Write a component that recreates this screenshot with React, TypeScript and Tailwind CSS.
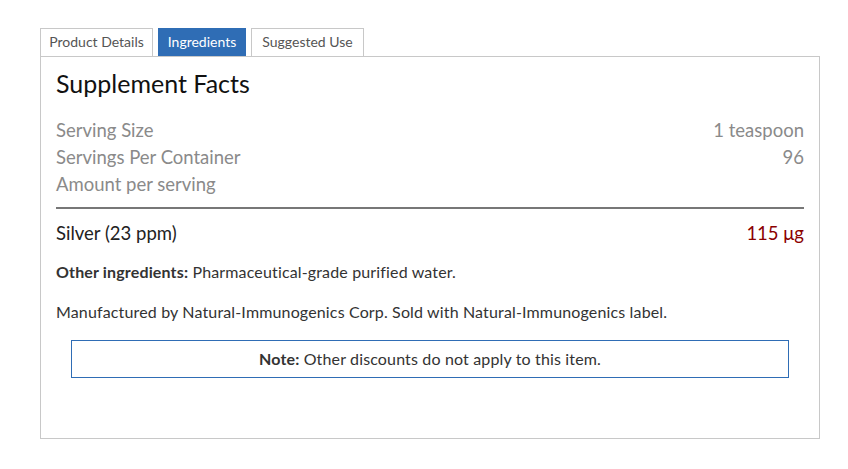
import React from 'react';

const tabs = [
  { label: 'Product Details', w: 'w-[113px]' },
  { label: 'Ingredients', w: 'w-[88px]' },
  { label: 'Suggested Use', w: 'w-[113px]' },
];

export default function App() {
  const active = 'Ingredients';
  return (
    <div className="min-h-[469px] bg-white pt-[28px] pl-[40px] font-['Lato','Noto_Sans',sans-serif]">
      <div className="w-[780px]">
        {/* tabs */}
        <div className="flex gap-[5px]">
          {tabs.map((t) => (
            <div
              key={t.label}
              className={
                t.label === active
                  ? `${t.w} h-[28px] pb-[2px] flex items-center justify-center bg-[#2f6db5] border border-[#2f6db5] text-white text-[14px]`
                  : `${t.w} h-[28px] pb-[2px] flex items-center justify-center border border-b-0 border-[#c8c8c8] text-[#555] text-[14px]`
              }
            >
              {t.label}
            </div>
          ))}
        </div>

        {/* panel */}
        <div className="h-[383px] border border-[#c8c8c8] px-[15px] pt-[10px]">
          <h2 className="text-[25px] text-[#111] leading-[32px]">Supplement Facts</h2>

          <div className="mt-[18px] text-[18.5px] leading-[27px] text-[#8a8a8a]">
            <div className="flex justify-between">
              <span>Serving Size</span>
              <span>1 teaspoon</span>
            </div>
            <div className="flex justify-between">
              <span>Servings Per Container</span>
              <span>96</span>
            </div>
            <div>Amount per serving</div>
          </div>

          <div className="mt-[9px] h-[2px] bg-[#777]" />

          <div className="mt-[12px] flex justify-between text-[18.5px] leading-[24px] text-[#222]">
            <span>Silver (23 ppm)</span>
            <span className="text-[#8b0000]">115 μg</span>
          </div>

          <p className="mt-[17px] text-[16px] tracking-[0.15px] leading-[20px] text-[#333]">
            <span className="font-bold">Other ingredients:</span> Pharmaceutical-grade purified water.
          </p>

          <p className="mt-[20px] text-[16px] tracking-[0.15px] leading-[20px] text-[#333]">
            Manufactured by Natural-Immunogenics Corp. Sold with Natural-Immunogenics label.
          </p>

          <div className="mt-[18px] mx-[15px] h-[38px] border border-[#2f6db5] flex items-center justify-center text-[16px] tracking-[0.15px] text-[#333]">
            <span>
              <span className="font-bold">Note:</span> Other discounts do not apply to this item.
            </span>
          </div>
        </div>
      </div>
    </div>
  );
}
